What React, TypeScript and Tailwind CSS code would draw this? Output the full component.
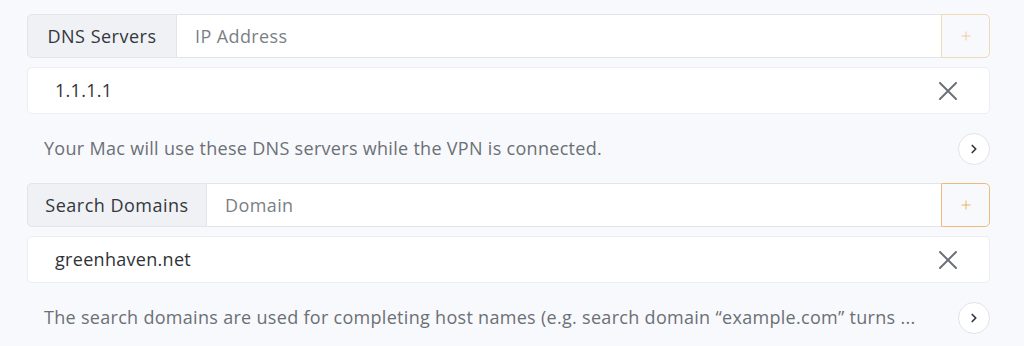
import { ChevronRight, Plus } from "lucide-react"

interface ListProps {
  label: string
  placeholder: string
  labelWidth: string
  value: string
  help: string
  dimAdd?: boolean
}

const CloseIcon = () => (
  <svg width="18" height="18" viewBox="0 0 18 18" className="text-[#6c7178]">
    <path d="M1 1 L17 17 M17 1 L1 17" stroke="currentColor" strokeWidth="2" strokeLinecap="round" />
  </svg>
)

const AddressList = ({ label, placeholder, labelWidth, value, help, dimAdd = false }: ListProps) => {
  return (
    <div>
      <div className="flex h-[44px]">
        <div
          className={`${labelWidth} flex items-center justify-center rounded-l-[5px] border border-[#e2e4e9] bg-[#eff1f5] text-[18px] tracking-[0.5px] text-[#33373d]`}
        >
          {label}
        </div>
        <div className="flex flex-1 items-center border-y border-[#e2e4e9] bg-white pl-[18px] text-[18px] tracking-[0.4px] text-[#7a7f86]">
          {placeholder}
        </div>
        <button
          className={`flex w-[49px] items-center justify-center rounded-r-[5px] border ${
            dimAdd ? "border-[#f2d8b4] text-[#eec793]" : "border-[#ecbc78] text-[#e9a94f]"
          } bg-[#f8f9fc]`}
        >
          <Plus size={14} strokeWidth={1.5} />
        </button>
      </div>

      <div className="mt-[9px] flex h-[47px] items-center justify-between rounded-[5px] border border-[#eceef3] bg-white pl-[27px] pr-[32px]">
        <span className="text-[18px] tracking-[0.3px] text-[#2f3338]">{value}</span>
        <CloseIcon />
      </div>

      <div className="flex h-[69px] items-center justify-between pl-[17px]">
        <span className="whitespace-nowrap overflow-hidden text-[18px] tracking-[0.3px] text-[#6b7076]">{help}</span>
        <button className="ml-6 flex h-[32px] w-[32px] shrink-0 items-center justify-center rounded-full border border-[#e2e4e8] bg-white text-[#33373d]">
          <ChevronRight size={14} strokeWidth={3} />
        </button>
      </div>
    </div>
  )
}

export default function App() {
  return (
    <div
      className="h-[346px] w-[1024px] overflow-hidden bg-[#f8f9fc] pl-[27px] pr-[34px] pt-[14px]"
      style={{ fontFamily: "'Open Sans', 'Noto Sans', sans-serif" }}
    >
      <AddressList
        label="DNS Servers"
        placeholder="IP Address"
        labelWidth="w-[150px]"
        value="1.1.1.1"
        help="Your Mac will use these DNS servers while the VPN is connected."
        dimAdd
      />
      <AddressList
        label="Search Domains"
        placeholder="Domain"
        labelWidth="w-[180px]"
        value="greenhaven.net"
        help="The search domains are used for completing host names (e.g. search domain “example.com” turns ..."
      />
    </div>
  )
}
